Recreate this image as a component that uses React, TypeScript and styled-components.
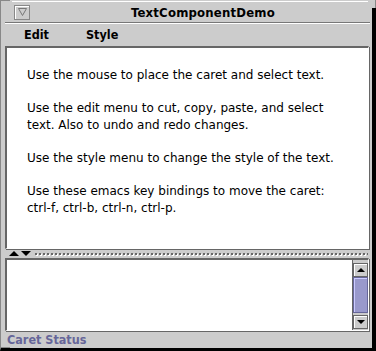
import React from "react";
import styled, { createGlobalStyle } from "styled-components";

const Global = createGlobalStyle`
  html, body { margin: 0; padding: 0; background: #000; }
  body { font-family: "DejaVu Sans", "Liberation Sans", sans-serif; }
`;

const gray = "#cccccc";
const dark = "#666666";
const primary1 = "#666699";
const primary2 = "#9999cc";
const primary3 = "#ccccff";
const boldFont = `"DejaVu Sans Condensed", "DejaVu Sans", sans-serif`;

const Window = styled.div`
  position: relative;
  width: 376px;
  height: 351px;
  box-sizing: border-box;
  background: ${gray};
  border-right: 4px solid #000;
  border-bottom: 3px solid #000;
  border-left: 1px solid #888;
  display: flex;
  flex-direction: column;
`;

const TopEdge = styled.div`
  height: 1px;
  margin: 1px 4px 0 11px;
  background: #fff;
`;

const TitleBar = styled.div`
  height: 20px;
  display: flex;
  align-items: center;
  padding: 0 4px 0 13px;
`;

const MinButton = styled.div`
  width: 16px;
  height: 15px;
  box-sizing: border-box;
  border: 1px solid #888;
  box-shadow: inset 1px 1px 0 #fff;
  display: flex;
  align-items: center;
  justify-content: center;
`;

const Title = styled.div`
  flex: 1;
  text-align: center;
  font-family: ${boldFont};
  font-weight: bold;
  font-size: 13px;
  letter-spacing: 0.2px;
  color: #000;
  padding-left: 8px;
`;

const Separator = styled.div`
  height: 1px;
  margin: 0 2px 0 4px;
  background: #777;
  border-bottom: 1px solid #fff;
`;

const MenuBar = styled.div`
  height: 21px;
  display: flex;
  align-items: center;
  padding-left: 23px;
  gap: 37px;
`;

const MenuItem = styled.span`
  font-family: ${boldFont};
  font-weight: bold;
  font-size: 12.5px;
  color: #000;
`;

const Content = styled.div`
  display: flex;
  flex-direction: column;
  margin: 1px 3px 0 4px;
`;

const TextPane = styled.div`
  height: 203px;
  box-sizing: border-box;
  background: #fff;
  border-top: 2px solid ${dark};
  border-left: 2px solid ${dark};
  border-right: 1px solid #fff;
  border-bottom: 1px solid #fff;
  box-shadow: 1px 1px 0 ${dark};
  padding: 19px 0 0 20px;
  font-size: 12px;
  line-height: 17px;
  color: #000;
`;

const Para = styled.p`
  margin: 0 0 16px 0;
  white-space: nowrap;
`;

const Divider = styled.div`
  height: 9px;
  display: flex;
  align-items: center;
  gap: 2px;
  padding: 0 1px 0 4px;
`;

const Arrow = styled.div<{ $up?: boolean }>`
  width: 0;
  height: 0;
  border-left: 5px solid transparent;
  border-right: 5px solid transparent;
  ${(p) =>
    p.$up
      ? `border-bottom: 5px solid #000;`
      : `border-top: 5px solid #000;`}
`;

const Dots = styled.div`
  flex: 1;
  height: 4px;
  margin-left: 1px;
  background-image: radial-gradient(circle, #666 0.9px, transparent 1px),
    radial-gradient(circle, #fff 0.9px, transparent 1px);
  background-size: 4px 4px, 4px 4px;
  background-position: 0 0, 1px 1px;
`;

const ScrollPane = styled.div`
  height: 73px;
  box-sizing: border-box;
  display: flex;
  border-top: 2px solid ${dark};
  border-left: 2px solid ${dark};
  border-right: 1px solid #fff;
  border-bottom: 1px solid #fff;
  box-shadow: 1px 1px 0 ${dark};
`;

const TextArea = styled.div`
  flex: 1;
  background: #fff;
`;

const ScrollBar = styled.div`
  width: 16px;
  display: flex;
  flex-direction: column;
  padding: 3px 0 1px;
  box-sizing: border-box;
  background: ${gray};
  border-left: 1px solid ${dark};
`;

const ScrollButton = styled.div`
  height: 14px;
  box-sizing: border-box;
  display: flex;
  align-items: center;
  justify-content: center;
  background: ${gray};
  border: 1px solid ${dark};
  box-shadow: inset 1px 1px 0 #fff;
`;

const Thumb = styled.div`
  height: 36px;
  box-sizing: border-box;
  background-color: ${primary2};
  border: 1px solid ${primary1};
  box-shadow: inset 1px 1px 0 ${primary3};
  background-image: radial-gradient(circle, ${primary1} 0.6px, transparent 0.7px),
    radial-gradient(circle, ${primary3} 0.6px, transparent 0.7px);
  background-size: 4px 4px, 4px 4px;
  background-position: 1px 1px, 3px 3px;
`;

const Track = styled.div`
  flex: 1;
`;

const SmallTri = styled.div<{ $up?: boolean }>`
  width: 0;
  height: 0;
  border-left: 4px solid transparent;
  border-right: 4px solid transparent;
  ${(p) =>
    p.$up ? `border-bottom: 4px solid #000;` : `border-top: 4px solid #000;`}
`;

const Status = styled.div`
  height: 17px;
  display: flex;
  align-items: center;
  padding-left: 6px;
  font-family: ${boldFont};
  font-weight: bold;
  font-size: 12.5px;
  color: ${primary1};
`;

const Corner = styled.div<{ $pos: "tl" | "bl" }>`
  position: absolute;
  width: 10px;
  height: 10px;
  left: -1px;
  ${(p) => (p.$pos === "tl" ? "top: 0;" : "bottom: 0;")}
  border-${(p) => (p.$pos === "tl" ? "top" : "bottom")}: 1px solid #888;
  border-left: 1px solid #888;
  box-sizing: border-box;
`;

const RightCap = styled.div`
  position: absolute;
  top: 0;
  right: -4px;
  width: 4px;
  height: 8px;
  background: ${gray};
  border-right: 1px solid #888;
  box-sizing: border-box;
`;

export default function App() {
  return (
    <>
      <Global />
      <Window>
        <TopEdge />
        <TitleBar>
          <MinButton>
            <svg width="9" height="8" viewBox="0 0 9 8">
              <path d="M0.5 0.5 H8.5 L4.5 7.5 Z" fill="none" stroke="#777" strokeWidth="1" />
            </svg>
          </MinButton>
          <Title>TextComponentDemo</Title>
        </TitleBar>
        <Separator />
        <MenuBar>
          <MenuItem>Edit</MenuItem>
          <MenuItem>Style</MenuItem>
        </MenuBar>
        <Content>
          <TextPane>
            <Para>Use the mouse to place the caret and select text.</Para>
            <Para>
              Use the edit menu to cut, copy, paste, and select
              <br />
              text. Also to undo and redo changes.
            </Para>
            <Para>Use the style menu to change the style of the text.</Para>
            <Para>
              Use these emacs key bindings to move the caret:
              <br />
              ctrl-f, ctrl-b, ctrl-n, ctrl-p.
            </Para>
          </TextPane>
          <Divider>
            <Arrow $up />
            <Arrow />
            <Dots />
          </Divider>
          <ScrollPane>
            <TextArea />
            <ScrollBar>
              <ScrollButton>
                <SmallTri $up />
              </ScrollButton>
              <Thumb />
              <Track />
              <ScrollButton>
                <SmallTri />
              </ScrollButton>
            </ScrollBar>
          </ScrollPane>
        </Content>
        <Status>Caret Status</Status>
        <Corner $pos="tl" />
        <Corner $pos="bl" />
        <RightCap />
      </Window>
    </>
  );
}
